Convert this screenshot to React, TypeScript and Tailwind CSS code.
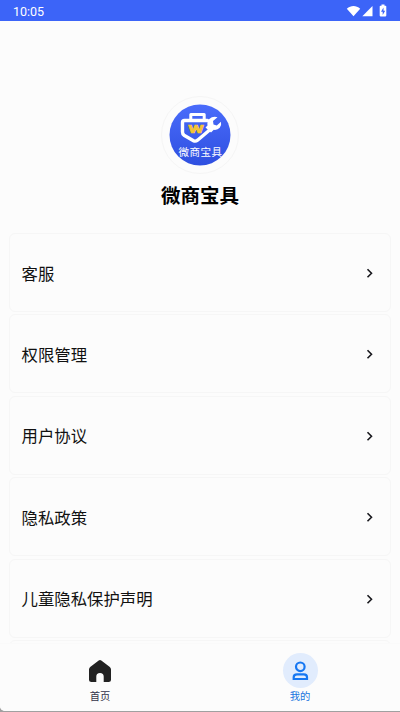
const menuItems = ["客服", "权限管理", "用户协议", "隐私政策", "儿童隐私保护声明"];

function StatusBar() {
    return (
        <header className="flex h-[21px] shrink-0 items-center justify-between bg-[#3c64f8] pr-[12px] pl-[13px] text-white">
            <span className="pt-[3px] font-['Roboto',sans-serif] text-[12.5px] leading-none font-normal">10:05</span>
            <svg width="42" height="14" viewBox="0 0 42 14" fill="currentColor">
                <path d="M.8 4.700C4.900 1.100 10.100 1.100 14.200 4.700L7.500 12.200Z" />
                <path d="M26.500 2V12.200H16.300Z" />
                <path d="M35.500 1.800V.5h3v1.300h1q.8 0 .8.8v9q0 .8-.8.8h-5q-.8 0-.8-.8V2.600q0-.8.8-.8Z" />
                <path d="M37.500 3.500l-2.500 4.200H36.700V11l2.500-4.300H37.500Z" fill="#3c64f8" />
            </svg>
        </header>
    );
}

function Logo() {
    return (
        <svg width="62" height="62" viewBox="0 0 62 62">
            <defs>
                <linearGradient id="logoBg" x1="0" y1="0" x2="0" y2="1">
                    <stop offset="0" stopColor="#4a6cfb" />
                    <stop offset="1" stopColor="#2e4fe0" />
                </linearGradient>
            </defs>
            <circle cx="31" cy="31" r="30.500" fill="url(#logoBg)" />
            {/* Toolbox */}
            <g fill="none" stroke="#fff" strokeLinejoin="round" strokeLinecap="round">
                <path d="M21.800 15V10.400H35.200V15" strokeWidth="3" />
                <path d="M38.500 16.500H15.500Q13.500 16.500 13.500 18.500V28Q13.500 30 15 31.200L24.500 36.700Q26.500 37.800 28.500 36.200L43 24" strokeWidth="3.400" />
            </g>
            {/* Wrench */}
            <path d="M48.500 13.200Q43.500 12 40.300 15Q37.800 17.500 38.500 21.500L36.500 23.500L42 28.500L44.800 25.800Q48.500 26.300 50.700 23.800Q52.800 21 52 17.800L47.800 21.500L44.500 20.500L44 17Z" fill="#fff" />
            <text
                x="27"
                y="28.700"
                textAnchor="middle"
                fill="#f5c336"
                stroke="#f5c336"
                strokeWidth=".6"
                textLength="15.5"
                lengthAdjust="spacingAndGlyphs"
                className="font-['Roboto',sans-serif] text-[10.5px] font-bold"
            >
                W
            </text>
            <text
                x="9.500"
                y="52.300"
                fill="#fff"
                textLength="43.500"
                className="font-['Noto_Sans_CJK_SC',sans-serif] text-[10.5px]"
            >
                微商宝具
            </text>
        </svg>
    );
}

function MenuRow({ label }: { label: string }) {
    return (
        <li className="flex h-[79px] shrink-0 items-center justify-between rounded-[6px] border border-[#f6f6f6] pt-[1px] pr-[16px] pl-[11.5px]">
            <span className="text-[16.4px] text-[#111]">{label}</span>
            <svg width="8" height="12" viewBox="0 0 8 12" fill="none" stroke="#18181d" strokeWidth="1.600">
                <path d="M1.500 2.200L5.500 6.200L1.500 10.200" />
            </svg>
        </li>
    );
}

export default function App() {
    return (
        <div className="h-[712px] w-[400px] overflow-hidden bg-[#a0a0a0] font-['Noto_Sans_CJK_SC',sans-serif]">
            <div className="flex h-[711px] flex-col overflow-hidden rounded-bl-[5px] bg-[#fcfcfc]">
                <StatusBar />

                <main className="min-h-0 flex-1 overflow-hidden">
                    {/* Profile */}
                    <section className="flex flex-col items-center pt-[75px]">
                        <div className="flex size-[78px] items-center justify-center rounded-full border border-[#f5f5f5]">
                            <Logo />
                        </div>
                        <h1 className="mt-[7px] text-[19.5px] leading-[28px] font-bold text-black">微商宝具</h1>
                    </section>

                    <ul className="mt-[24px] flex flex-col gap-[2.400px] px-[9px]">
                        {menuItems.map((label) => (
                            <MenuRow key={label} label={label} />
                        ))}
                        <li className="h-[79px] shrink-0 rounded-[6px] border border-[#f6f6f6]" />
                    </ul>
                </main>

                {/* Tab bar */}
                <nav className="grid h-[68px] shrink-0 grid-cols-2 border-t border-[#fafafa] bg-[#fcfcfc] pt-[9px] text-[10.3px] leading-[16px]">
                    <a className="flex flex-col items-center text-[#34344a]">
                        <span className="flex size-[35px] items-center justify-center">
                            <svg width="24" height="24" viewBox="0 0 24 24" fill="#222">
                                <path d="M10.700 1.600Q12 .6 13.300 1.600L21.500 7.700Q23 8.800 23 10.500V20.500Q23 23 20.500 23H15.700V17.500Q15.700 14 12 14T8.300 17.500V23H3.500Q1 23 1 20.500V10.500Q1 8.800 2.500 7.700Z" />
                            </svg>
                        </span>
                        首页
                    </a>
                    <a className="flex flex-col items-center text-[#1874df]">
                        <span className="flex size-[35px] items-center justify-center rounded-full bg-[#e1ecfd]">
                            <svg width="18" height="20" viewBox="0 0 18 20" fill="none" stroke="#1677f2" strokeWidth="2.200">
                                <circle cx="9.300" cy="5.800" r="4.300" />
                                <path d="M2.700 18V16.300Q2.700 13.300 6 13.300H12.800Q16 13.300 16 16.300V18Z" />
                            </svg>
                        </span>
                        我的
                    </a>
                </nav>
            </div>
        </div>
    );
}
